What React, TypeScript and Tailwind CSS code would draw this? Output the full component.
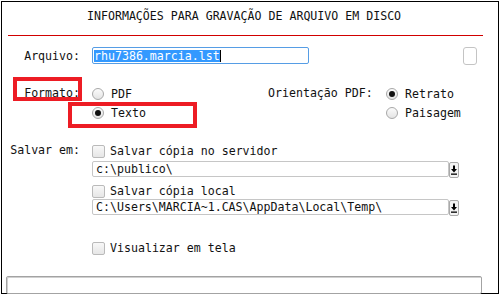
import type { ReactNode } from 'react'

const font =
  "font-['DejaVu_Sans_Mono','Liberation_Mono',monospace] text-[11.6px] leading-[16px] text-[#111]"

function Label({ children, className = '' }: { children: ReactNode; className?: string }) {
  return <div className={`w-[78px] shrink-0 whitespace-nowrap text-right ${className}`}>{children}</div>
}

function Radio({ checked }: { checked?: boolean }) {
  return (
    <span className="flex size-[12px] shrink-0 items-center justify-center rounded-full border border-[#a8a8a8] bg-linear-to-b from-[#fbfbfb] to-[#e4e4e4]">
      {checked && <span className="size-[6px] rounded-full bg-[#111]" />}
    </span>
  )
}

function RadioRow({ label, checked }: { label: string; checked?: boolean }) {
  return (
    <div className="flex h-[19px] items-center gap-[7px] whitespace-nowrap">
      <Radio checked={checked} />
      <span>{label}</span>
    </div>
  )
}

function CheckRow({ label, className = '' }: { label: string; className?: string }) {
  return (
    <div className={`flex h-[14px] items-center gap-[5px] whitespace-nowrap ${className}`}>
      <span className="size-[13px] shrink-0 rounded-[2px] border border-[#bababa] bg-linear-to-b from-[#f8f8f8] to-[#e6e6e6]" />
      <span>{label}</span>
    </div>
  )
}

function PathField({ value, className = '' }: { value: string; className?: string }) {
  return (
    <div className={`flex items-start ${className}`}>
      <div className="flex h-[16px] w-[357px] items-center rounded-[2px] border border-[#c6c6c6] pl-[3px] leading-[14px] whitespace-nowrap">
        {value}
      </div>
      <button
        type="button"
        className="mt-px flex h-[16px] w-[10px] items-center justify-center rounded-[2px] border border-[#a9a9a9] bg-[#f3f3f3]"
      >
        <svg width="6" height="10" viewBox="0 0 6 10" aria-hidden>
          <rect x="2" y="0.5" width="2" height="4" fill="#000" />
          <path d="M0 4 L6 4 L3 7.5 Z" fill="#000" />
          <rect x="0" y="8.5" width="6" height="1.3" fill="#000" />
        </svg>
      </button>
    </div>
  )
}

export default function App() {
  return (
    <div className={`relative h-[297px] w-[500px] overflow-hidden bg-white ${font}`}>
      <div className="ml-px mt-px flex h-[293px] w-[498px] flex-col border border-black">
        <div className="h-[33px] shrink-0 whitespace-nowrap pl-[85px] pt-[6px]">
          INFORMAÇÕES PARA GRAVAÇÃO DE ARQUIVO EM DISCO
        </div>
        <div className="ml-[6px] h-px w-[475px] shrink-0 bg-[#d10000]" />

        {/* arquivo */}
        <div className="mt-[11px] flex h-[17px] shrink-0 items-center">
          <Label>Arquivo:</Label>
          <div className="ml-[12px] flex h-[17px] w-[217px] items-center rounded-[2px] border border-[#569de5] pl-px">
            <span className="bg-[#3399ff] leading-[12px] whitespace-nowrap text-white">rhu7386.marcia.lst</span>
            <span className="h-[12px] w-px bg-black" />
          </div>
          <div className="ml-auto mr-[21px] h-[18px] w-[14px] self-start rounded-[3px] border border-[#c4c4c4]" />
        </div>

        {/* formato / orientação */}
        <div className="mt-[20px] flex shrink-0">
          <Label className="leading-[19px]">Formato:</Label>
          <div className="ml-[12px] flex w-[176px] shrink-0 flex-col">
            <RadioRow label="PDF" />
            <RadioRow label="Texto" checked />
          </div>
          <div className="w-[118px] shrink-0 whitespace-nowrap leading-[19px]">Orientação PDF:</div>
          <div className="flex flex-col">
            <RadioRow label="Retrato" checked />
            <RadioRow label="Paisagem" />
          </div>
        </div>

        {/* salvar em */}
        <div className="mt-[22px] flex shrink-0">
          <Label className="-mt-[2px]">Salvar em:</Label>
          <div className="ml-[12px] flex flex-col">
            <CheckRow label="Salvar cópia no servidor" />
            <PathField className="mt-[3px]" value="c:\publico\" />
            <CheckRow className="mt-[6px]" label="Salvar cópia local" />
            <PathField className="mt-px" value="C:\Users\MARCIA~1.CAS\AppData\Local\Temp\" />
            <CheckRow className="mt-[25px]" label="Visualizar em tela" />
          </div>
        </div>

        <div className="ml-[4px] mt-[21px] h-[18px] w-[476px] shrink-0 rounded-[2px] border border-[#a3a3a3] shadow-[inset_1px_1px_0_#d0d0d0]" />
      </div>

      {/* marcações em vermelho */}
      <div className="absolute left-[13px] top-[77px] h-[24px] w-[69px] border-4 border-[#ed1c24]" />
      <div className="absolute left-[68px] top-[102px] h-[26px] w-[129px] border-4 border-[#ed1c24]" />
    </div>
  )
}
